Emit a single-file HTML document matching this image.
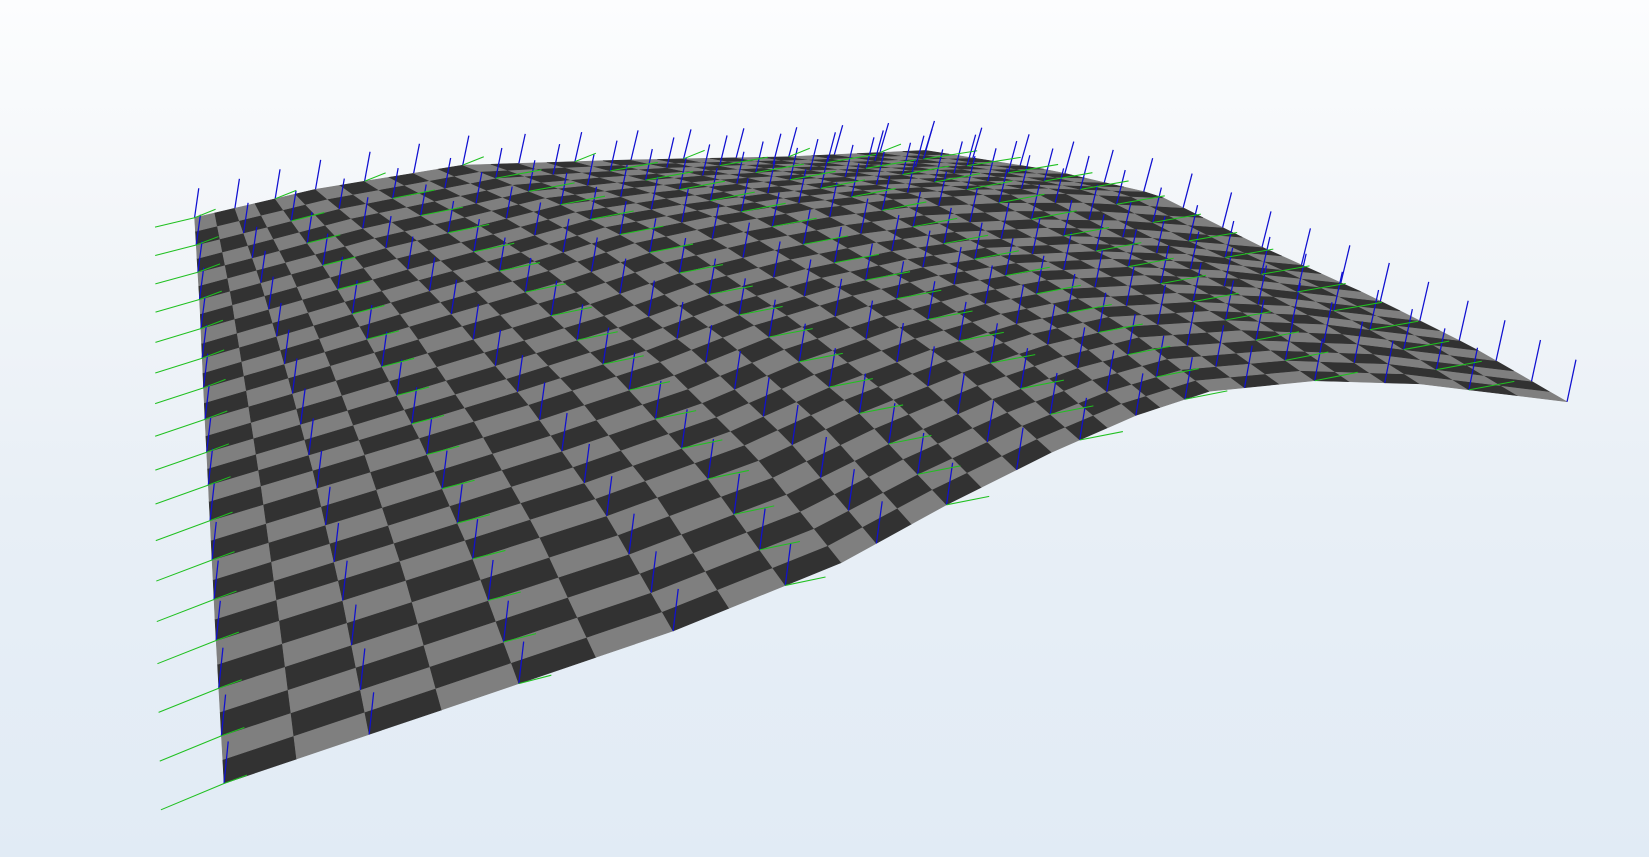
<!DOCTYPE html>
<html><head><meta charset="utf-8"><style>
html,body{margin:0;padding:0;width:1649px;height:857px;overflow:hidden;background:linear-gradient(#fcfdfe 0%,#f3f6f9 25%,#e8eff6 60%,#e1ebf5 100%)}
svg{position:absolute;left:0;top:0}
</style></head><body>
<svg width="1649" height="857" xmlns="http://www.w3.org/2000/svg"><g id="s" transform="scale(1.0517)"></g></svg>
<script>
function pl(pts,t){var n=pts.length-1,f=t*n,i=Math.min(Math.floor(f),n-1),r=f-i;return[pts[i][0]*(1-r)+pts[i+1][0]*r,pts[i][1]*(1-r)+pts[i+1][1]*r];}
var C0=[[213,745],[420,675],[640,600],[800,535],[900,480],[1000,430],[1080,395],[1150,372],[1250,362],[1350,365],[1490,382]];
var C1=[[185,207],[300,180],[440,157],[600,152],[750,149],[880,143]];
var D0=[[213,745],[205,600],[199,480],[194,380],[190,290],[185,207]];
var D1=[[1490,382],[1400,330],[1300,280],[1200,235],[1100,185],[1000,162],[880,143]];
function S(u,v){var a=pl(C0,u),b=pl(C1,u),c=pl(D0,v),d=pl(D1,v);var p00=C0[0],p10=C0[C0.length-1],p01=C1[0],p11=C1[C1.length-1];var r=[];for(var k=0;k<2;k++){r[k]=(1-v)*a[k]+v*b[k]+(1-u)*c[k]+u*d[k]-((1-u)*(1-v)*p00[k]+u*(1-v)*p10[k]+(1-u)*v*p01[k]+u*v*p11[k]);}return r;}
var NU=30,NV=32,h='';
for(var i=0;i<NU;i++)for(var j=0;j<NV;j++){var q=[S(i/NU,j/NV),S((i+1)/NU,j/NV),S((i+1)/NU,(j+1)/NV),S(i/NU,(j+1)/NV)];var c=((i+j)%2?'#7f7f7f':'#323232');h+='<polygon points="'+q.map(function(p){return p[0].toFixed(1)+','+p[1].toFixed(1)}).join(' ')+'" fill="'+c+'" stroke="'+c+'" stroke-width="0.5"/>';}
for(var i=0;i<=NU;i+=2)for(var j=0;j<=NV;j+=2){var p=S(i/NU,j/NV),q=S(i/NU,Math.min(1,(j+1)/NV));var len=28+(1-j/NV)*12;
h+='<line x1="'+p[0]+'" y1="'+p[1]+'" x2="'+(p[0]+4+i*0.15)+'" y2="'+(p[1]-len)+'" stroke="#1010d0" stroke-width="1.2"/>';
if(i%4==0&&i<NU)h+='<line x1="'+p[0]+'" y1="'+p[1]+'" x2="'+(p[0]+(q[0]-p[0])*-1.5+20)+'" y2="'+(p[1]-8)+'" stroke="#20c020" stroke-width="1"/>';}
for(var j=0;j<=NV;j+=2){var p=S(0,j/NV);h+='<line x1="'+p[0]+'" y1="'+p[1]+'" x2="'+(p[0]-60+j*0.7)+'" y2="'+(p[1]+25-j*0.5)+'" stroke="#20c020" stroke-width="1"/>';}
document.getElementById('s').innerHTML=h;
</script>
</body></html>
